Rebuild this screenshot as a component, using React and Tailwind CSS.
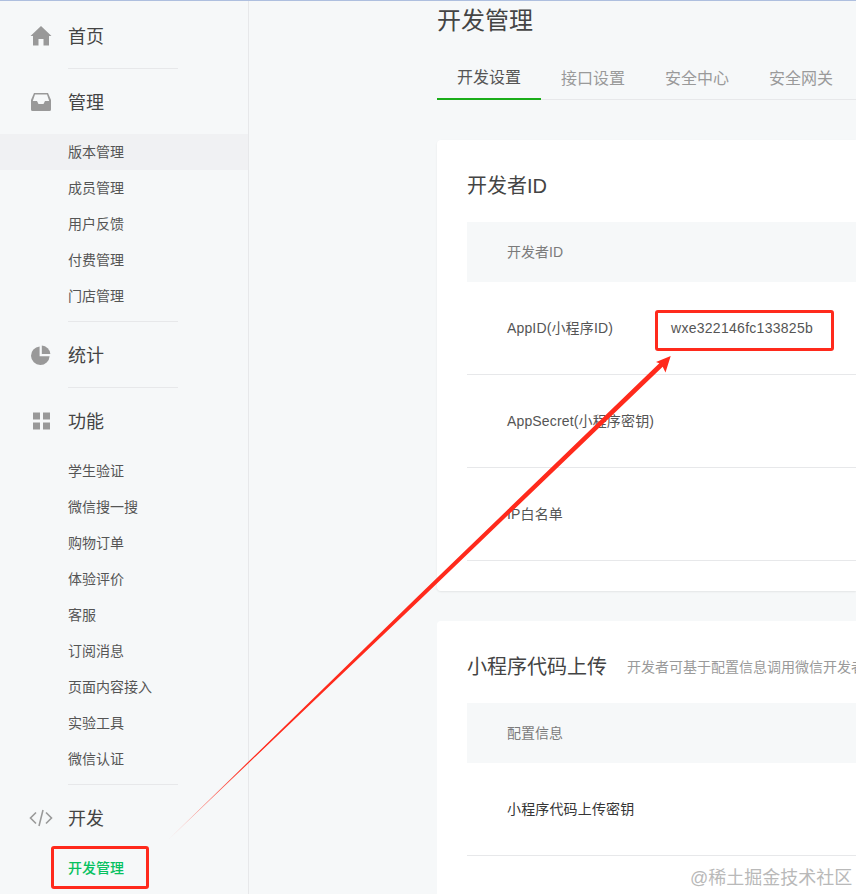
const CJK = '"Liberation Sans","Noto Sans CJK SC",sans-serif';

function Home() {
  return (
    <svg width="22" height="20" viewBox="0 0 22 20" className="block">
      <path d="M11 0 L21.5 10 H19 V19.5 H13.5 V13 H8.5 V19.5 H3 V10 H0.5 Z" fill="#999" />
    </svg>
  );
}
function Inbox() {
  return (
    <svg width="20" height="18" viewBox="0 0 20 18" className="block">
      <path fillRule="evenodd" d="M3 0 H17 L20 7 V16.5 A1.5 1.5 0 0 1 18.5 18 H1.5 A1.5 1.5 0 0 1 0 16.5 V7 Z M4 1.5 L1.8 8 H6 L7.5 11 H12.5 L14 8 H18.2 L16 1.5 Z" fill="#999" />
    </svg>
  );
}
function Pie() {
  return (
    <svg width="20" height="20" viewBox="0 0 20 20" className="block">
      <path d="M8.6 1.4 V11.2 H18.6 A9.3 9.3 0 1 1 8.6 1.4 Z" fill="#999" />
      <path d="M10.8 0.6 A9 9 0 0 1 19.4 9 H10.8 Z" fill="#999" />
    </svg>
  );
}
function Grid() {
  return (
    <svg width="18" height="18" viewBox="0 0 18 18" className="block">
      <rect x="1" y="0.5" width="7" height="7" fill="#999" />
      <rect x="11" y="0.5" width="7" height="7" fill="#999" />
      <rect x="1" y="10.5" width="7" height="7" fill="#999" />
      <rect x="11" y="10.5" width="7" height="7" fill="#999" />
    </svg>
  );
}
function Code() {
  return (
    <svg width="24" height="18" viewBox="0 0 24 18" className="block" fill="none" stroke="#999" strokeWidth="1.6">
      <path d="M7 3.5 L1.5 9 L7 14.5" />
      <path d="M17 3.5 L22.5 9 L17 14.5" />
      <path d="M14 1 L10 17" />
    </svg>
  );
}

function Section({ icon, title, items, active, current, last }) {
  return (
    <div>
      <div className="h-[65px] flex items-center">
        <div className="w-[68px] flex justify-center pl-[14px] shrink-0">
          <div className="w-[26px] flex justify-center">{icon}</div>
        </div>
        <span className="text-[18px] text-[#444] pt-[3px]">{title}</span>
      </div>
      {items && (
        <div className="pb-[7px]">
          {items.map((t) => (
            <div
              key={t}
              className={
                "h-9 flex items-center pl-[68px] text-sm " +
                (t === active ? "bg-[#f0f1f3] " : "") +
                (t === current ? "text-[#07c160] font-medium" : "text-[#555]")
              }
            >
              {t}
            </div>
          ))}
        </div>
      )}
      {!last && <div className="ml-[68px] w-[110px] h-px bg-[#e7e8ea]" />}
    </div>
  );
}

function Row({ label, value, dark }) {
  return (
    <div className="h-[93px] border-b border-[#e7e8ea] flex items-center pl-10 text-sm">
      <div className={"w-[164px] shrink-0 tracking-[0.15px] " + (dark ? "text-[#353535]" : "text-[#555]")}>{label}</div>
      {value && <div className="text-[#555] tracking-[0.28px]">{value}</div>}
    </div>
  );
}

export default function App() {
  return (
    <div className="relative w-[856px] h-[894px] overflow-hidden bg-[#f6f8f9]" style={{ fontFamily: CJK }}>
      <div className="h-px bg-[#aebfdf]" />
      <div className="flex h-[893px]">
        <aside className="w-[249px] shrink-0 border-r border-[#e7e8ea] pt-[2px]">
          <Section icon={<Home />} title="首页" />
          <Section
            icon={<Inbox />}
            title="管理"
            items={["版本管理", "成员管理", "用户反馈", "付费管理", "门店管理"]}
            active="版本管理"
          />
          <Section icon={<Pie />} title="统计" />
          <Section
            icon={<Grid />}
            title="功能"
            items={["学生验证", "微信搜一搜", "购物订单", "体验评价", "客服", "订阅消息", "页面内容接入", "实验工具", "微信认证"]}
          />
          <Section icon={<Code />} title="开发" items={["开发管理"]} current="开发管理" last />
        </aside>
        <main className="flex-1 min-w-0 pl-[188px]">
          <h1 className="text-2xl font-normal text-[#444] h-[38px] leading-[38px] pt-px">开发管理</h1>
          <div className="flex h-[61px] border-b border-[#e7e8ea]">
            {["开发设置", "接口设置", "安全中心", "安全网关"].map((t, i) => (
              <div
                key={t}
                className={
                  "w-[104px] h-[61px] flex items-center justify-center pt-[19px] text-base " +
                  (i === 0 ? "text-[#555] border-b-2 border-[#1aad19]" : "text-[#9a9a9a]")
                }
              >
                {t}
              </div>
            ))}
          </div>
          <section className="mt-10 h-[451px] bg-white rounded-l-[4px] pl-[30px] shadow-[0_1px_2px_rgba(0,0,0,0.08)]">
            <div className="h-[82px] flex items-center pt-[10px] text-xl text-[#444]">开发者ID</div>
            <div className="h-[60px] bg-[#f6f8f9] flex items-center pl-10 text-sm text-[#7b7b7b]">开发者ID</div>
            <Row label="AppID(小程序ID)" value="wxe322146fc133825b" />
            <Row label="AppSecret(小程序密钥)" />
            <Row label="IP白名单" />
          </section>
          <section className="mt-[30px] bg-white rounded-l-[4px] pl-[30px] h-[400px]">
            <div className="h-[82px] flex items-center pt-[10px] whitespace-nowrap overflow-hidden">
              <span className="text-xl text-[#444]">小程序代码上传</span>
              <span className="ml-5 text-sm text-[#9a9a9a]">开发者可基于配置信息调用微信开发者工具提供的代码上传模块</span>
            </div>
            <div className="h-[60px] bg-[#f6f8f9] flex items-center pl-10 text-sm text-[#7b7b7b]">配置信息</div>
            <Row label="小程序代码上传密钥" dark />
          </section>
        </main>
      </div>

      <div className="absolute left-[655px] top-[310px] w-[179px] h-[41px] border-[3px] border-[#ff2a1c] rounded-[3px]" />
      <div className="absolute left-[51px] top-[846px] w-[98px] h-[43px] border-[3px] border-[#ff2a1c] rounded-[3px]" />
      <svg className="absolute left-0 top-0 pointer-events-none" width="856" height="894" viewBox="0 0 856 894">
        <defs>
          <linearGradient id="fade" gradientUnits="userSpaceOnUse" x1="168" y1="840" x2="250" y2="761">
            <stop offset="0" stopColor="#ff2a1c" stopOpacity="0.3" />
            <stop offset="1" stopColor="#ff2a1c" />
          </linearGradient>
        </defs>
        <polygon points="168,840 417.7,596.6 659.3,363.2 656,362 670.7,356 665.5,372.5 662.7,366.8 420.3,599.4" fill="url(#fade)" />
      </svg>
      <div className="absolute left-[690px] top-[866px] text-[18px] leading-6 text-[#b9b9b9] whitespace-nowrap">@稀土掘金技术社区</div>
    </div>
  );
}
